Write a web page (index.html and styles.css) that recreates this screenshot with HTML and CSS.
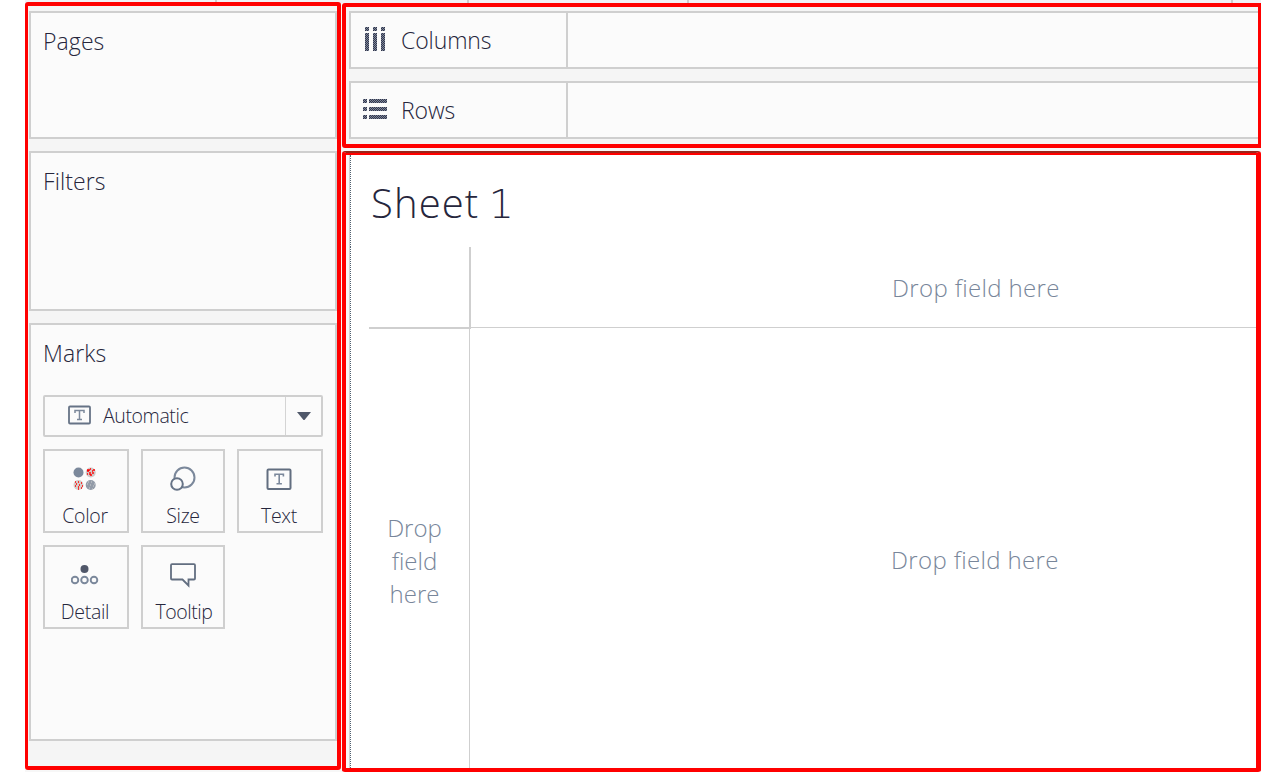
FILE: index.html
```
<!DOCTYPE html>
<html lang="en">
<head>
<meta charset="utf-8">
<title>Sheet 1</title>
<link rel="stylesheet" href="styles.css">
</head>
<body>
<div class="app">
  <header class="strip"><i class="s1"></i><i class="s2"></i><i class="s3"></i><i class="s4"></i></header>
  <aside class="side">
    <section class="card pages"><h2>Pages</h2></section>
    <section class="card filters"><h2>Filters</h2></section>
    <section class="card marks">
      <h2>Marks</h2>
      <div class="select">
        <svg class="sel-icon" width="24" height="20" viewBox="0 0 24 20"><rect x="2" y="1.500" width="21" height="17" rx="1" fill="none" stroke="#667386" stroke-width="1.800"/><path d="M8 8V5.500h9V8M12.500 5.500v9M10 14.500h5" fill="none" stroke="#7b889b" stroke-width="1.500"/></svg>
        <span class="sel-label">Automatic</span>
        <span class="arrow"><svg width="14" height="8" viewBox="0 0 14 8"><path d="M0 0h14L7.500 8h-1z" fill="#50586a"/></svg></span>
      </div>
      <div class="grid">
        <div class="btn wide"><svg width="28" height="28" viewBox="0 0 28 28"><circle cx="7.500" cy="7.500" r="5" fill="#7b889b"/><circle cx="19.700" cy="7.500" r="5" fill="#d0c8c8"/><circle cx="7.500" cy="20" r="5" fill="#d5cdca"/><circle cx="19.700" cy="20" r="5" fill="#929ba8"/><path d="M16 6h2m1-2h1m2 1h2m-8 4h1m2-2v3m3-3v2m-3 1h2m-5-5h3m2 1h1" stroke="#f00" stroke-width="1.400"/><path d="M4 17h1m2 0h1m2 1h1m-6 1h1m2 1h1m2 1h1m-8 0h1m2 1h1m2 1h1m-4 1h1" stroke="#f00" stroke-width="1.400"/><path d="M17 17h1m2 0h1m2 2h1m-8 0h1m2 1h1m2 1h1m-5 2h1m2 1h1" stroke="#d0d0d0"/></svg><span>Color</span></div>
        <div class="btn"><svg width="28" height="28" viewBox="0 0 28 28"><circle cx="15.500" cy="12.500" r="10" fill="none" stroke="#7b889b" stroke-width="2"/><circle cx="8" cy="19" r="5.800" fill="#fbfbfb" stroke="#667386" stroke-width="2"/></svg><span>Size</span></div>
        <div class="btn wide"><svg width="28" height="28" viewBox="0 0 28 28"><rect x="2.500" y="4.500" width="23" height="19.500" rx="1" fill="none" stroke="#626e80" stroke-width="2"/><path d="M10 11.500V9.200h8.400v2.300M14.200 9.200v9.500M11.500 18.700h5.400" fill="none" stroke="#7b889b" stroke-width="1.600"/></svg><span>Text</span></div>
        <div class="btn wide"><svg width="28" height="28" viewBox="0 0 28 28"><circle cx="13.500" cy="8" r="4" fill="#505769"/><g fill="none" stroke="#7b889b" stroke-width="1.900"><circle cx="4" cy="19" r="3.300"/><circle cx="13.500" cy="19" r="3.300"/><circle cx="23" cy="19" r="3.300"/></g></svg><span>Detail</span></div>
        <div class="btn"><svg width="28" height="28" viewBox="0 0 28 28"><path d="M3 3.200h22q1 0 1 1V17.500q0 1-1 1h-5.500v6L13.500 18.500H3q-1 0-1-1V4.200q0-1 1-1z" fill="none" stroke="#626e80" stroke-width="1.800"/></svg><span class="tip">Tooltip</span></div>
      </div>
    </section>
  </aside>
  <main class="work">
    <section class="shelves">
      <div class="shelf"><div class="shelf-name"><svg width="28" height="28" viewBox="0 0 28 28"><defs><pattern id="weave" width="2" height="2" patternUnits="userSpaceOnUse"><path d="M0 0h2v2H0z" fill="#7b889b"/><path d="M0 0h1v1H0zM1 1h1v1H1z" fill="#34344a"/></pattern></defs><path d="M4 1h4v4H4zM12 1h4v4h-4zM20 1h4v4h-4zM4 7h4v18H4zM12 7h4v18h-4zM20 7h4v18h-4z" fill="url(#weave)"/></svg><span>Columns</span></div></div>
      <div class="shelf"><div class="shelf-name"><svg width="28" height="28" viewBox="0 0 28 28"><path d="M2 3h4v4H2zM2 11h4v4H2zM2 19h4v4H2zM8 3h18v4H8zM8 11h18v4H8zM8 19h18v4H8z" fill="url(#weave)"/></svg><span>Rows</span></div></div>
    </section>
    <section class="sheet">
      <div class="canvas">
        <h1>Sheet <span class="num">1</span></h1>
        <div class="table">
          <div class="corner"></div>
          <div class="col-drop"><span>Drop field here</span></div>
          <div class="row-drop"><span>Drop</span><span>field</span><span>here</span></div>
          <div class="body-drop"><span>Drop field here</span></div>
        </div>
      </div>
    </section>
  </main>
</div>
</body>
</html>
```
FILE: styles.css
```
*{box-sizing:border-box}
body{margin:0;background:#fff;font-family:"Open Sans","Noto Sans",sans-serif;font-weight:300;color:#26263c;overflow:hidden}
h1,h2{margin:0;font-weight:300}
svg{display:block;flex:none}
span{white-space:nowrap}
.app{width:1236px;height:772px;margin-left:25px;background:#f7f7f7;display:grid;grid-template-columns:316px 919px;grid-template-rows:2px 770px;column-gap:1px}
.strip{grid-column:1/3;background:#f1f1f5;height:3px;display:flex}
.strip i{width:2px;background:#ccc;height:3px}
.s1{margin-left:190px}.s2{margin-left:250px}.s3{margin-left:218px}.s4{margin-left:542px}
.side{height:768px;border:4px solid #f00;border-left-width:3px;border-radius:3px;background:#f5f5f5;padding:5px 0 0 1px;display:flex;flex-direction:column;gap:12px;z-index:1}
.card{width:308px;border:2px solid #cfcfcf;background:#fbfbfb;padding:12px 12px 0}
.pages{height:128px}.filters{height:160px}.marks{height:418px}
h2{font-size:23px;line-height:32px;height:32px;letter-spacing:.1px}
.select{margin-top:26px;height:42px;border:2px solid #cfcfcf;border-radius:2px;display:flex;align-items:center}
.sel-icon{margin:-3px 0 0 22px}
.sel-label{margin-left:12px;font-size:19.500px;line-height:38px;letter-spacing:-.4px}
.arrow{margin-left:auto;width:36px;height:38px;border-left:1px solid #d4d4d4;display:flex;align-items:center;justify-content:center}
.grid{margin-top:12px;display:grid;grid-template-columns:86px 84px 86px;grid-template-rows:84px 84px;gap:12px}
.btn{border:2px solid #cfcfcf;display:flex;flex-direction:column;align-items:center;padding-top:14px;font-size:19.500px;letter-spacing:-.3px}
.wide{padding-right:2px}
.btn span{line-height:28px;margin-top:9px}
.btn .tip{letter-spacing:-.45px;padding-left:2px}
.work{padding-top:1px;display:flex;flex-direction:column;gap:3px;z-index:1}
.shelves{height:145px;border:4px solid #f00;border-right-width:3px;border-radius:3px 0 0 3px;background:#f5f5f5;padding:4px 0 0 3px;display:flex;flex-direction:column;gap:12px}
.shelf{height:58px;border:2px solid #cfcfcf;border-right:0;background:#fbfbfb;display:flex}
.shelf-name{width:217px;border-right:2px solid #cfcfcf;display:flex;align-items:center;padding-left:10px;font-size:23px;gap:12px}
.shelf-name span{letter-spacing:-.1px;padding-bottom:1px}
.sheet{height:621px;border:4px solid #f00;border-top:2px solid #9c2418;border-right-width:5px;border-radius:3px;background:#f7f7f7;padding-left:3px;box-shadow:inset 0 2px #f00}
.canvas{margin-top:2px;height:613px;border-left:1px solid #d2d2d2;background:#fff}
.canvas h1{border-left:1px dotted #526170;height:92px;padding:20px 0 0 20px;font-size:40px;line-height:56px;letter-spacing:1.100px}
.num{font-family:"DejaVu Sans",sans-serif;font-weight:200;font-size:39.500px;line-height:1;margin-left:-2px}
.table{border-left:1px dotted #526170;padding-left:18px;height:521px;display:grid;grid-template-columns:102px 1fr;grid-template-rows:82px 1fr;color:#78869a;font-size:24px}
.corner{border-right:2px solid #cfcfcf;border-bottom:2px solid #cfcfcf}
.col-drop,.body-drop{letter-spacing:.35px}
.col-drop{border-bottom:1px solid #cfcfcf;height:81px;display:flex;align-items:center;padding:0 0 0 421px}
.row-drop{width:101px;border-right:1px solid #cfcfcf;display:flex;flex-direction:column;align-items:center;padding:182px 9px 0 0;line-height:33px}
.body-drop{padding:214px 0 0 420px;line-height:34px}
```
